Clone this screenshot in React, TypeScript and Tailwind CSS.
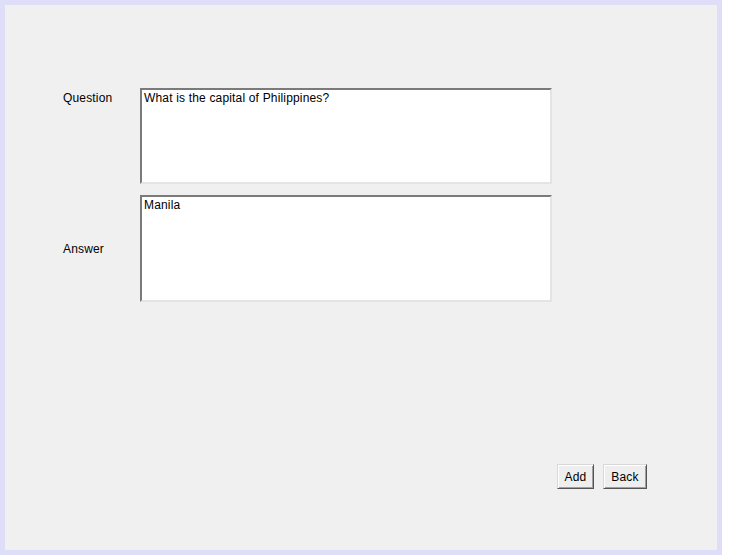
export default function App() {
  return (
    <div className="w-[729px] h-[560px] bg-white" style={{ fontFamily: '"Liberation Sans", Arial, sans-serif' }}>
      <div className="w-[722px] h-[555px] border-[5px] border-[#dedef8] bg-[#f0f0f0] flex flex-col text-[12px] tracking-[0.17px] text-black">
        {/* Form */}
        <div className="pt-[83px] pl-[58px] grid grid-cols-[77px_412px] gap-y-[11px]">
          <div className="pt-[3px] leading-[14px]">Question</div>
          <div className="h-[96px] bg-white border-2 border-t-[#7a7a7a] border-l-[#7a7a7a] border-r-[#e4e4e4] border-b-[#e4e4e4] px-[2px] pt-[1px] leading-[14px]">
            What is the capital of Philippines?
          </div>

          <div className="self-center leading-[14px]">Answer</div>
          <div className="h-[107px] bg-white border-2 border-t-[#7a7a7a] border-l-[#7a7a7a] border-r-[#e4e4e4] border-b-[#e4e4e4] px-[2px] pt-[1px] leading-[14px]">
            Manila
          </div>
        </div>

        {/* Actions */}
        <div className="mt-auto mb-[61px] pl-[552px] flex gap-[9px]">
          <button className="h-[25px] w-[37px] bg-[#eeeeee] border border-t-[#d8d8d8] border-l-[#d8d8d8] border-r-[#555] border-b-[#555] shadow-[inset_1px_1px_0_#ffffff,inset_-1px_-1px_0_#a0a0a0] leading-[14px]">
            Add
          </button>
          <button className="h-[25px] w-[44px] bg-[#eeeeee] border border-t-[#d8d8d8] border-l-[#d8d8d8] border-r-[#555] border-b-[#555] shadow-[inset_1px_1px_0_#ffffff,inset_-1px_-1px_0_#a0a0a0] leading-[14px]">
            Back
          </button>
        </div>
      </div>
    </div>
  )
}
